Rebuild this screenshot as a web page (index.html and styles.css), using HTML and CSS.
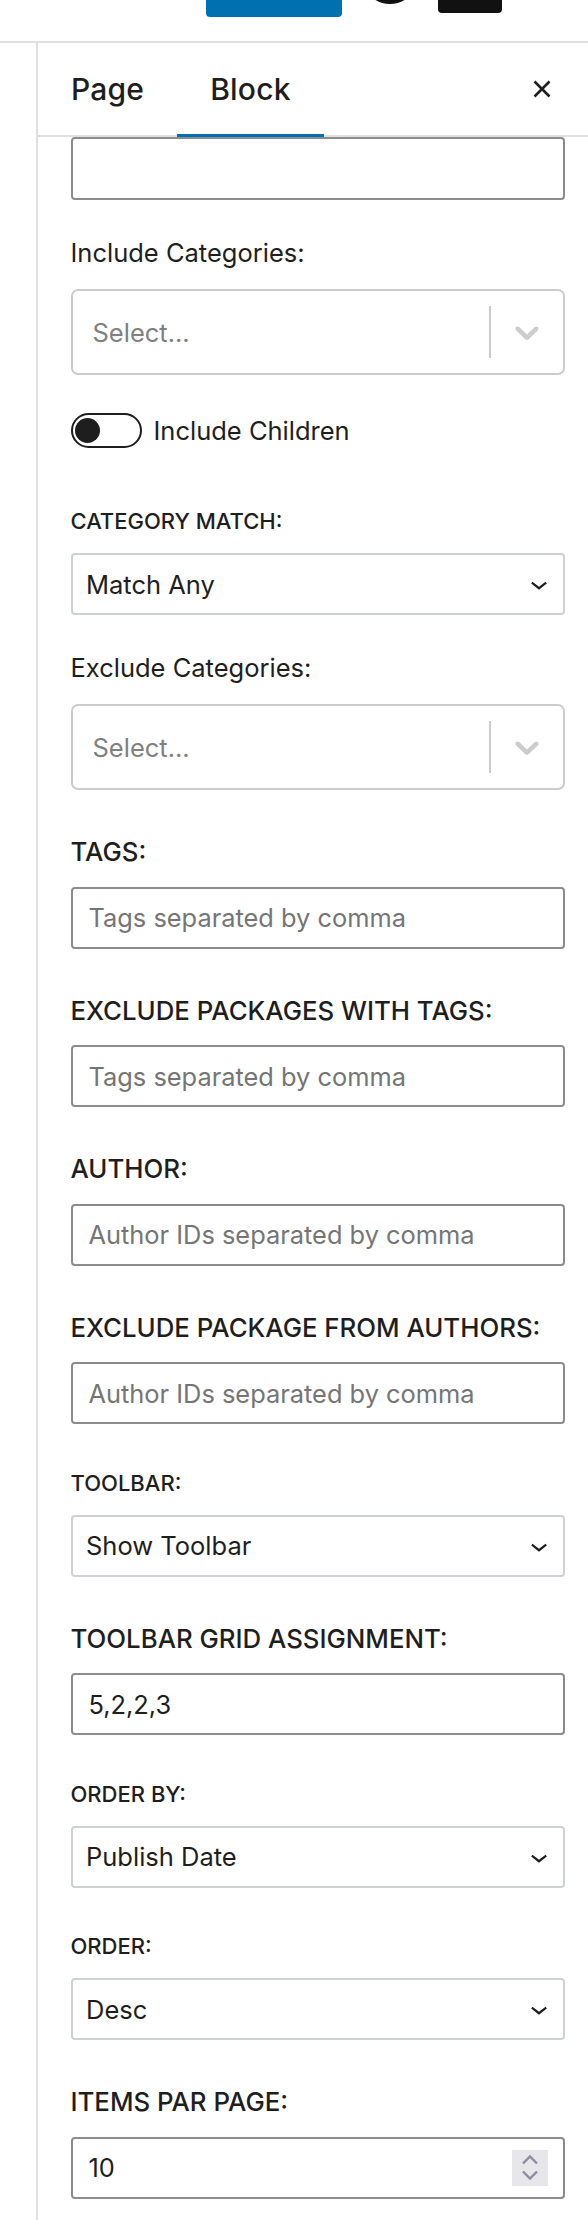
FILE: index.html
```html
<!DOCTYPE html>
<html lang="en">
<head>
<meta charset="utf-8">
<title>Block settings</title>
<link rel="stylesheet" href="styles.css">
</head>
<body>
<header class="topbar">
  <div class="btn-blue"></div>
  <div class="ring"></div>
  <div class="btn-dark"></div>
</header>
<div class="main">
  <div class="gutter"></div>
  <aside class="sidebar">
    <nav class="tabs">
      <div class="tab">Page</div>
      <div class="tab active">Block</div>
      <div class="close">
        <svg width="18" height="18" viewBox="0 0 18 18"><path d="M1.5 1.5L16.5 16.5M16.5 1.5L1.5 16.5" stroke="#1e1e1e" stroke-width="2.6" fill="none"/></svg>
      </div>
    </nav>
    <div class="panel">
      <div class="input"></div>

      <div class="field field-m">
        <div class="lbl-m">Include Categories:</div>
        <div class="rselect">
          <div class="rs-value">Select...</div>
          <div class="rs-sep"></div>
          <div class="rs-ind"><svg width="40" height="40" viewBox="0 0 20 20"><path fill="#cccccc" d="M4.516 7.548c0.436-0.446 1.043-0.481 1.576 0l3.908 3.747 3.908-3.747c0.533-0.481 1.141-0.446 1.574 0 0.436 0.445 0.408 1.197 0 1.615-0.406 0.418-4.695 4.502-4.695 4.502-0.217 0.223-0.502 0.335-0.787 0.335s-0.57-0.112-0.789-0.335c0 0-4.287-4.084-4.695-4.502s-0.436-1.17 0-1.615z"/></svg></div>
        </div>
      </div>

      <div class="toggle-row">
        <div class="toggle"><div class="knob"></div></div>
        <span class="toggle-label">Include Children</span>
      </div>

      <div class="field field-s after-toggle">
        <div class="lbl-s">CATEGORY MATCH:</div>
        <div class="select"><span>Match Any</span><svg class="chev" width="34" height="34" viewBox="0 0 24 24"><path d="M17.5 11.6L12 16l-5.5-4.4.9-1.2L12 14l4.6-3.6 1 1.2z"/></svg></div>
      </div>

      <div class="field field-m">
        <div class="lbl-m">Exclude Categories:</div>
        <div class="rselect">
          <div class="rs-value">Select...</div>
          <div class="rs-sep"></div>
          <div class="rs-ind"><svg width="40" height="40" viewBox="0 0 20 20"><path fill="#cccccc" d="M4.516 7.548c0.436-0.446 1.043-0.481 1.576 0l3.908 3.747 3.908-3.747c0.533-0.481 1.141-0.446 1.574 0 0.436 0.445 0.408 1.197 0 1.615-0.406 0.418-4.695 4.502-4.695 4.502-0.217 0.223-0.502 0.335-0.787 0.335s-0.57-0.112-0.789-0.335c0 0-4.287-4.084-4.695-4.502s-0.436-1.17 0-1.615z"/></svg></div>
        </div>
      </div>

      <div class="field field-u">
        <div class="lbl-u">TAGS:</div>
        <div class="input"><span class="ph">Tags separated by comma</span></div>
      </div>

      <div class="field field-u">
        <div class="lbl-u">EXCLUDE PACKAGES WITH TAGS:</div>
        <div class="input"><span class="ph">Tags separated by comma</span></div>
      </div>

      <div class="field field-u">
        <div class="lbl-u">AUTHOR:</div>
        <div class="input"><span class="ph">Author IDs separated by comma</span></div>
      </div>

      <div class="field field-u">
        <div class="lbl-u">EXCLUDE PACKAGE FROM AUTHORS:</div>
        <div class="input"><span class="ph">Author IDs separated by comma</span></div>
      </div>

      <div class="field field-s">
        <div class="lbl-s">TOOLBAR:</div>
        <div class="select"><span>Show Toolbar</span><svg class="chev" width="34" height="34" viewBox="0 0 24 24"><path d="M17.5 11.6L12 16l-5.5-4.4.9-1.2L12 14l4.6-3.6 1 1.2z"/></svg></div>
      </div>

      <div class="field field-u">
        <div class="lbl-u">TOOLBAR GRID ASSIGNMENT:</div>
        <div class="input"><span>5,2,2,3</span></div>
      </div>

      <div class="field field-s">
        <div class="lbl-s">ORDER BY:</div>
        <div class="select"><span>Publish Date</span><svg class="chev" width="34" height="34" viewBox="0 0 24 24"><path d="M17.5 11.6L12 16l-5.5-4.4.9-1.2L12 14l4.6-3.6 1 1.2z"/></svg></div>
      </div>

      <div class="field field-s">
        <div class="lbl-s">ORDER:</div>
        <div class="select"><span>Desc</span><svg class="chev" width="34" height="34" viewBox="0 0 24 24"><path d="M17.5 11.6L12 16l-5.5-4.4.9-1.2L12 14l4.6-3.6 1 1.2z"/></svg></div>
      </div>

      <div class="field field-u">
        <div class="lbl-u">ITEMS PAR PAGE:</div>
        <div class="input input-num"><span>10</span>
          <div class="spin"><svg width="36" height="36" viewBox="0 0 36 36"><path d="M11 13.5L18 6.5L25 13.5M11 21.5L18 28.5L25 21.5" stroke="#8d8d9c" stroke-width="2.4" fill="none"/></svg></div>
        </div>
      </div>
    </div>
  </aside>
</div>
</body>
</html>
```

FILE: styles.css
```css
* { box-sizing: border-box; }

html, body {
  margin: 0;
  padding: 0;
  background: #ffffff;
}

body {
  font-family: Inter, "Noto Sans", "Liberation Sans", sans-serif;
  color: #1e1e1e;
}

.topbar {
  height: 43px;
  border-bottom: 2px solid #e0e0e0;
  display: flex;
  justify-content: flex-end;
  align-items: flex-start;
  gap: 20px;
  padding-right: 86px;
  overflow: hidden;
}

.btn-blue {
  width: 136px;
  height: 17px;
  background: #0070b1;
  border-radius: 0 0 4px 4px;
}

.ring {
  width: 56px;
  height: 56px;
  margin-top: -52px;
  border: 5px solid #111111;
  border-radius: 50%;
  flex-shrink: 0;
}

.btn-dark {
  width: 64px;
  height: 13px;
  background: #111111;
  border-radius: 0 0 4px 4px;
}

.main {
  display: flex;
  min-height: 2177px;
}

.gutter {
  width: 38px;
  border-right: 2px solid #e0e0e0;
  flex-shrink: 0;
}

.sidebar {
  flex: 1;
  min-width: 0;
}

.tabs {
  display: flex;
  align-items: stretch;
  height: 94px;
  border-bottom: 2px solid #e0e0e0;
}

.tab {
  position: relative;
  display: flex;
  align-items: center;
  padding: 0 33px;
  font-size: 30px;
  font-weight: 500;
  letter-spacing: 0.2px;
}

.tab.active::after {
  content: "";
  position: absolute;
  left: 0;
  right: 0;
  bottom: -2px;
  height: 3px;
  background: #0070b1;
}

.close {
  margin-left: auto;
  margin-right: 37px;
  display: flex;
  align-items: center;
}

.close svg { display: block; }

.panel {
  padding: 0 23px 40px 32.5px;
}

.input {
  height: 62px;
  border: 2px solid #8c8c8c;
  border-radius: 4px;
  display: flex;
  align-items: center;
  padding: 0 16px;
  font-size: 25.4px;
  color: #1e1e1e;
}

.panel > .input:first-child { height: 63px; }

.ph { color: #757575; }

.input-num {
  justify-content: space-between;
  padding-right: 15.5px;
}

.spin {
  width: 36px;
  height: 36px;
  background: #e6e6eb;
  display: flex;
}

.field-m { margin-top: 35px; }
.field-u { margin-top: 44px; }
.field-s { margin-top: 43.5px; }
.field-s.after-toggle { margin-top: 58px; }

.lbl-m {
  font-size: 25.5px;
  line-height: 35px;
  margin-bottom: 19px;
}

.lbl-u {
  font-size: 25.8px;
  line-height: 35px;
  font-weight: 500;
  margin-bottom: 17.5px;
}

.lbl-s {
  font-size: 22px;
  line-height: 31px;
  font-weight: 500;
  margin-bottom: 16px;
}

.rselect {
  height: 86px;
  border: 2px solid #cccccc;
  border-radius: 7px;
  display: flex;
  align-items: stretch;
}

.rs-value {
  flex: 1;
  display: flex;
  align-items: center;
  padding-left: 20px;
  font-size: 25.5px;
  color: #808080;
}

.rs-sep {
  width: 2px;
  background: #cccccc;
  margin: 15px 0;
}

.rs-ind {
  display: flex;
  align-items: center;
  padding: 0 16px;
}

.rs-ind svg { display: block; }

.toggle-row {
  margin-top: 38px;
  display: flex;
  align-items: center;
  gap: 12px;
}

.toggle {
  width: 71px;
  height: 35px;
  border: 2.3px solid #1e1e1e;
  border-radius: 18px;
  display: flex;
  align-items: center;
  padding-left: 2px;
}

.knob {
  width: 25px;
  height: 25px;
  border-radius: 50%;
  background: #1e1e1e;
}

.toggle-label {
  font-size: 25.5px;
  line-height: 35px;
}

.select {
  height: 62px;
  border: 2px solid #cdd1d6;
  border-radius: 4px;
  display: flex;
  align-items: center;
  justify-content: space-between;
  padding: 0 7px 0 13.5px;
  font-size: 25.5px;
  color: #1e1e1e;
}

.chev {
  display: block;
  fill: #1e1e1e;
}
```
